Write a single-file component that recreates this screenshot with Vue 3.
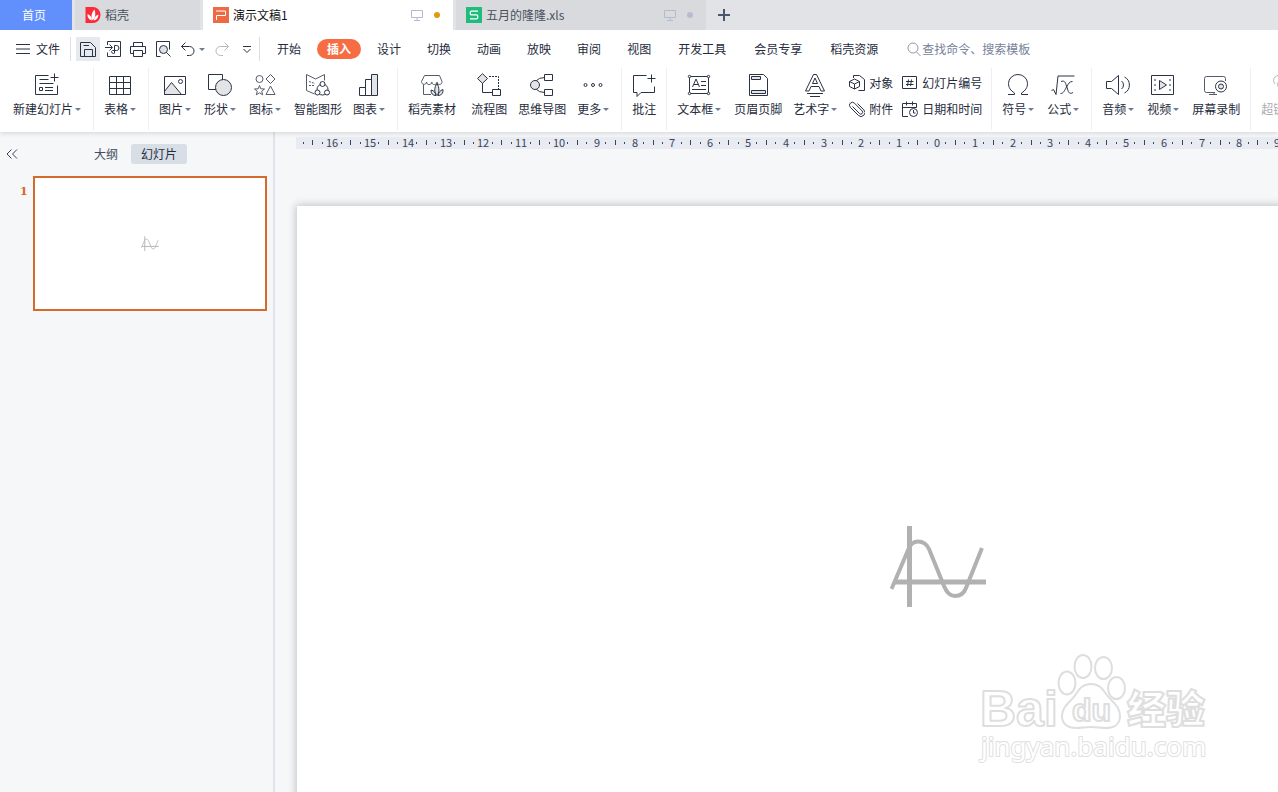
<template>
    <div class="app">
        <header class="top">
            <div class="tabs">
                <button class="tab-home">首页</button>
                <div v-for="tab in tabs" :key="tab.title" class="tab" :class="{ active: tab.active, narrow: !tab.status }">
                    <svg class="tab-icon" viewBox="0 0 16 16" v-html="logos[tab.logo]"></svg>
                    <span class="tab-title">{{ tab.title }}</span>
                    <template v-if="tab.status">
                        <svg class="monitor" viewBox="0 0 12 12"><path d="M.5 1.500h11v7h-11zM6 8.500v3M3 11.500h6" /></svg>
                        <i class="dot"></i>
                    </template>
                </div>
                <button class="tab-add" aria-label="新建">
                    <svg viewBox="0 0 12 12"><path d="M6 0v12M0 6h12" /></svg>
                </button>
            </div>

            <div class="menu">
                <button class="file">
                    <svg viewBox="0 0 14 10"><path d="M0 .5h14M0 5h14M0 9.500h14" /></svg>
                    <span>文件</span>
                </button>
                <div class="quick">
                    <button v-for="q in quick" :key="q.icon" class="quick-btn" :class="q.icon" :aria-label="q.label">
                        <svg viewBox="0 0 16 16" v-html="icons[q.icon]"></svg>
                        <i v-if="q.arrow" class="arrow"></i>
                    </button>
                </div>
                <nav class="nav">
                    <button v-for="m in menus" :key="m" class="nav-item" :class="{ on: m === current, long: m.length > 2 }" @click="current = m">{{ m }}</button>
                </nav>
                <label class="search">
                    <svg viewBox="0 0 14 14"><circle cx="6" cy="6" r="5" /><path d="M9.500 10l4 4" /></svg>
                    <input type="text" placeholder="查找命令、搜索模板" aria-label="查找命令、搜索模板">
                </label>
            </div>

            <div class="ribbon">
                <div v-for="(group, i) in groups" :key="i" class="group">
                    <div v-for="(part, j) in group" :key="j" class="part">
                        <template v-for="(item, k) in part" :key="k">
                            <div v-if="item.mini" class="mini-col">
                                <button v-for="m in item.mini" :key="m.label" class="mini">
                                    <svg viewBox="0 0 16 16" v-html="icons[m.icon]"></svg>
                                    <span>{{ m.label }}</span>
                                </button>
                            </div>
                            <button v-else class="item" :class="{ drop: item.arrow, off: item.off }">
                                <svg viewBox="0 0 24 24" v-html="icons[item.icon]"></svg>
                                <span class="item-label">{{ item.label }}<i v-if="item.arrow" class="arrow"></i></span>
                            </button>
                        </template>
                    </div>
                </div>
            </div>
        </header>

        <div class="body">
            <aside class="side">
                <div class="side-head">
                    <button class="collapse" aria-label="收起">
                        <svg viewBox="0 0 12 10"><path d="M5.500.500L1 5l4.500 4.500M11 .500L6.500 5l4.500 4.500" /></svg>
                    </button>
                    <button class="side-tab">大纲</button>
                    <button class="side-tab on">幻灯片</button>
                </div>
                <div class="thumb-row">
                    <span class="thumb-no">1</span>
                    <div class="thumb">
                        <svg class="wave" viewBox="0 0 96 82"><path :d="wave" /><path class="axis" d="M19.500 1v81M5 57h91" /></svg>
                    </div>
                </div>
            </aside>

            <main class="stage">
                <svg class="ruler">
                    <g v-for="t in ticks" :key="t.x">
                        <text v-if="t.text" :x="t.x" y="10">{{ t.text }}</text>
                        <rect v-else :x="t.x - 1" :y="t.half ? 3 : 5" width="1" :height="t.half ? 5 : 2" />
                    </g>
                </svg>
                <div class="slide">
                    <svg class="wave" viewBox="0 0 96 82"><path :d="wave" /><path class="axis" d="M19.500 1v81M5 57h91" /></svg>
                </div>
                <svg class="mark" viewBox="0 0 240 120">
                    <ellipse cx="92" cy="33" rx="8.500" ry="11.500" />
                    <ellipse cx="108" cy="16.500" rx="8.500" ry="11.500" />
                    <ellipse cx="128.500" cy="18" rx="8.500" ry="11" />
                    <ellipse cx="141.500" cy="38" rx="8.500" ry="11" />
                    <path d="M116 34c8 0 11 4 15 10 6 8 14 12 14 22 0 9-7 12-14 12-6 0-9-1-15-1s-9 1-15 1c-8 0-14-4-14-12 0-10 9-14 14-22 4-6 7-10 15-10z" />
                    <text class="mark-bai" x="5" y="76">Bai</text>
                    <text class="mark-du" x="97" y="71">du</text>
                    <text class="mark-cn" x="152" y="73">经验</text>
                    <text class="mark-url" x="6" y="106">jingyan.baidu.com</text>
                </svg>
            </main>
        </div>
    </div>
</template>

<script setup>
import { ref } from 'vue';

const current = ref('插入');

const tabs = [
    { title: '稻壳', logo: 'docer' },
    { title: '演示文稿1', logo: 'wpp', active: true, status: true },
    { title: '五月的隆隆.xls', logo: 'et', status: true }
];

const menus = ['开始', '插入', '设计', '切换', '动画', '放映', '审阅', '视图', '开发工具', '会员专享', '稻壳资源'];

const quick = [
    { icon: 'save', label: '保存' },
    { icon: 'export', label: '输出为PDF' },
    { icon: 'print', label: '打印' },
    { icon: 'preview', label: '打印预览' },
    { icon: 'undo', label: '撤销', arrow: true },
    { icon: 'redo', label: '恢复' },
    { icon: 'custom', label: '自定义' }
];

// group > part > item, a group ends with a divider line
const groups = [
    [[{ label: '新建幻灯片', icon: 'newSlide', arrow: true }]],
    [[{ label: '表格', icon: 'table', arrow: true }]],
    [[
        { label: '图片', icon: 'picture', arrow: true },
        { label: '形状', icon: 'shape', arrow: true },
        { label: '图标', icon: 'icons', arrow: true },
        { label: '智能图形', icon: 'smart' },
        { label: '图表', icon: 'chart', arrow: true }
    ]],
    [
        [{ label: '稻壳素材', icon: 'store' }],
        [
            { label: '流程图', icon: 'flow' },
            { label: '思维导图', icon: 'mind' },
            { label: '更多', icon: 'more', arrow: true }
        ]
    ],
    [[{ label: '批注', icon: 'comment' }]],
    [[
        { label: '文本框', icon: 'textbox', arrow: true },
        { label: '页眉页脚', icon: 'headFoot' },
        { label: '艺术字', icon: 'wordart', arrow: true },
        { mini: [{ label: '对象', icon: 'object' }, { label: '附件', icon: 'clip' }] },
        { mini: [{ label: '幻灯片编号', icon: 'number' }, { label: '日期和时间', icon: 'date' }] }
    ]],
    [[
        { label: '符号', icon: 'symbol', arrow: true },
        { label: '公式', icon: 'formula', arrow: true }
    ]],
    [[
        { label: '音频', icon: 'audio', arrow: true },
        { label: '视频', icon: 'video', arrow: true },
        { label: '屏幕录制', icon: 'record' }
    ]],
    [[{ label: '超链接', icon: 'link', arrow: true, off: true }]]
];

const logos = {
    docer: '<path fill="#fb2b3c" d="M.5 0h7.500a7.500 8 0 0 1 0 16H.5z"/><path fill="#fff" d="M7.800 13.500C5.500 10 6.500 5.500 9.500 2.500c1.500 4 1 8-1.700 11zM6.800 13.500C3.500 12.500 2.300 10 2.500 7c2.800 1 4.500 3.500 4.300 6.500zM8.800 13.500c.4-3 1.700-5 4.700-6 0 3-1.500 5.300-4.700 6z"/>',
    wpp: '<rect width="16" height="16" fill="#ee6a43"/><path fill="none" stroke="#fff" d="M3.500 13V8.500h9v-4.500H3"/>',
    et: '<rect width="16" height="16" fill="#1fbc7b"/><path fill="none" stroke="#fff" stroke-width="1.300" d="M12 4.200H5.500q-1.200 0-1.200 1.200v1.300q0 1.200 1.200 1.200h5q1.200 0 1.200 1.200v1.500q0 1.200-1.200 1.200H4"/>'
};

const icons = {
    save: '<path d="M.5 1.500h10l5 5v9H.5zM3.500 4.500h5.500M4.500 15.500v-7h8v7"/>',
    export: '<path d="M2.500 4V.5h13v15h-13v-4M0 6.500h7M4.500 3.500l3 3-3 3M9.500 12.500v-8h2a2.500 2.500 0 0 1 0 5h-4a1.500 1.500 0 1 0 2 2"/>',
    print: '<path d="M3.500 5.500v-4h9v4M3.500 12.500h-3v-7h15v7h-3M3.500 9.500h9v6h-9z"/>',
    preview: '<path d="M5.500 15.500h-4V.5h13v8"/><circle cx="8.500" cy="8.500" r="4" fill="#dfe1e4"/><path d="M11.500 11.500l4 4"/>',
    undo: '<path d="M5.500 1.500l-4 4 4 4M1.500 5.500h8a4.500 4.500 0 0 1 0 9H7"/>',
    redo: '<path d="M10.500 1.500l4 4-4 4M14.500 5.500h-8a4.500 4.500 0 0 0 0 9H9"/>',
    custom: '<path d="M4 5.500h8M4.500 8l3.500 3.500L11.500 8"/>',
    newSlide: '<path d="M13.500 2.500H.5v19h22v-9M15.500 4.500h8M19.500.5v8M4.500 6.500h9M4.500 10.500h14M4.500 14.500h3v3h-3zM10 14.500h8M10 17.500h8"/>',
    table: '<path d="M1.500 3.500h21v18h-21zM1.500 9.500h21M1.500 15.500h21M8.500 3.500v18M15.500 3.500v18"/>',
    picture: '<path d="M1.500 18.500L8.500 9.500l10 12h-17z" fill="#e3e4e6"/><path d="M1.500 3.500h21v18h-21z"/><circle cx="17.500" cy="8.500" r="2"/>',
    shape: '<path d="M.5 1.500h14v15H.5z"/><circle cx="15.500" cy="14.500" r="8" fill="#e3e4e6"/>',
    icons: '<g stroke="#555b69"><circle cx="6.500" cy="6" r="3.500"/><path d="M17.500 1.500L22 6l-4.500 4.500L13 6zM17.500 13l4.500 8.500h-9zM6.500 12.500l1.300 3.300 3.700.2-2.800 2.300 1 3.500-3.200-2-3.200 2 1-3.500L1.500 16l3.700-.2z"/></g>',
    smart: '<g stroke="#555b69"><path d="M8.500 21L.5 17.500V1.500l9 4.500 9-4.500v6"/><path d="M3 8.500l6 2M3 12.500h6" stroke-dasharray="2 1"/></g><circle cx="16.500" cy="16.500" r="5.500"/><circle cx="16.500" cy="11" r="2.500" fill="#fff"/><circle cx="11.500" cy="19.500" r="2.500" fill="#fff"/><circle cx="21" cy="19.500" r="2.500" fill="#fff"/>',
    chart: '<path d="M2.500 14.500h6v8h-6zM8.500 6.500h6v16h-6z"/><path d="M14.500 1.500h6v21h-6z" fill="#e3e4e6"/>',
    store: '<path stroke="#555b69" d="M11 21.500H3.500v-10M4.500 2.500h15l2.500 6c0 4-4.500 4-5 .5-.5 3.500-5 3.500-5.200 0-.5 3.500-5 3.500-5.300 0-.5 3.500-5 3-5-.5z"/><path fill="#e3e4e6" d="M17 22.500c-3-3-3-8 0-12 2.500 4 2.500 9 0 12zM16 22.500c-3.500 0-5-2-5-5.500 3 .5 4.500 2.500 5 5.500zM18 22.500c.5-3 2-5 5-6 .3 3.500-1.500 6-5 6z"/>',
    flow: '<path d="M5.500 10v9.500h10M15.500 16.500h8v6h-8z"/><path d="M5.500.7l5 4.800-5 4.800-5-4.800z" fill="#e3e4e6"/><path d="M12 3.500h9.500v13" stroke-dasharray="2 1"/>',
    mind: '<path d="M6 8q3-3.500 8.500-3.500M6 16q3 3.500 8.500 3.500M14.500 1.500h8v6h-8zM14.500 16.500h8v6h-8z"/><circle cx="5" cy="12" r="4.500" fill="#e3e4e6"/>',
    more: '<circle cx="4.500" cy="12" r="1.500"/><circle cx="12" cy="12" r="1.500"/><circle cx="19.500" cy="12" r="1.500"/>',
    comment: '<path d="M14.500 2.500H1.500v17h3.500v4l4-4h13.500v-6M15.500 5.500h8M19.500 1.500v8"/>',
    textbox: '<path d="M2.500 3.500h19v17h-19zM14 8.500h5M14 12.500h5M5 16.500h14"/><g fill="#fff"><circle cx="2.500" cy="3.500" r="1.200"/><circle cx="21.500" cy="3.500" r="1.200"/><circle cx="2.500" cy="20.500" r="1.200"/><circle cx="21.500" cy="20.500" r="1.200"/></g><path d="M5.500 14l3.500-8 3.500 8M7 11.500h4"/>',
    headFoot: '<path d="M3.500 1.500h14l4 4v17h-18z"/><path d="M5.500 3.500h9v3h-9zM5.500 17.500h14v3h-14z" fill="#e3e4e6"/>',
    wordart: '<path d="M10.500 1.500h3l8 16.500h-3.500l-2-4.500h-8L6 18H2.500zM9.500 10.500h5L12 5z"/><path d="M4 20.500h16M7 23.500h10"/>',
    object: '<path d="M4.500 3V.5h6l5 4v11h-6"/><path d="M5.500 4l5 2.500v5l-5 2.500-5-2.500v-5zM.5 6.500l5 2.500 5-2.500M5.500 9v5"/>',
    clip: '<path d="M3.500 5.500l7 7a1.800 1.800 0 0 0 2.700-2.500L5.500 2.200A2.900 2.900 0 0 0 1.300 6.300l8 8a3.800 3.800 0 0 0 5.500-5.500L8.500 2.500"/>',
    number: '<path d="M.5 1.500h14v12H.5zM6.500 4.500L5.500 11M9.500 4.500l-1 6.500M4 6.500h7.500M4 9.500h7.500"/>',
    date: '<path d="M6 15.500H.5v-13h14v4M.5 6.500h14M4.500.5v4M10.500.5v4"/><circle cx="11.500" cy="11.500" r="4" fill="#fff"/><path d="M11.500 9v3h2"/>',
    symbol: '<path d="M2 21.500h6.500V20C4.500 17.500 2.500 14.500 2.500 10.500a9.500 9 0 0 1 19 0c0 4-2 7-6 9.500v1.500H22"/>',
    formula: '<path d="M.5 17.500l2-1 2.500 5 2-18.500h16.500M10 8.500c3-1 4 0 5 3l2 6c1 3 2.500 3.500 5 2M21.500 8.500c-3 0-4 2-6 5.500s-3 6.500-6 6.500"/>',
    audio: '<path d="M.5 8.500h5l7-6v19l-7-6h-5zM15.500 8a5 5 0 0 1 0 8M18.500 4a9 9 0 0 1 0 16"/>',
    video: '<path d="M.5 2.500h22v19H.5z"/><path d="M8.500 7.500v9l7-4.500z" fill="#e3e4e6"/><path d="M4 6v13M19 6v13" stroke-dasharray="2 3"/>',
    record: '<path stroke="#555b69" d="M11 19.500H2.500a2 2 0 0 1-2-2v-12a2 2 0 0 1 2-2h17a2 2 0 0 1 2 2V8M5 21.500h8M10 19.500v2"/><circle cx="17" cy="13.500" r="5.500" fill="#fff"/><circle cx="17" cy="13.500" r="2.500" fill="#e3e4e6"/>',
    link: '<path d="M4 11a5 5 0 0 1 0-7 5 5 0 0 1 7 0l5 5a5 5 0 0 1 0 7M20 13a5 5 0 0 1 0 7 5 5 0 0 1-7 0l-5-5a5 5 0 0 1 0-7"/>'
};

const wave = 'M1.500 64L18.500 24Q21.500 16.500 28 16.500Q35.500 16.500 39 24L54 61Q58 71 65 71Q73 71 76 63L92 23';

// 1 cm at 96 dpi, quarter steps, zero in the middle of the slide
const CM = 37.8;
const ORIGIN = 641;
const ticks = [];
for (let q = -67; q <= 37; q++) {
    const x = Math.round(ORIGIN + (q * CM) / 4);
    ticks.push({
        x: x,
        text: q % 4 === 0 ? String(Math.abs(q / 4)) : '',
        half: Math.abs(q % 4) === 2
    });
}
</script>

<style>
body {
    margin: 0;
}
</style>

<style scoped>
.app {
    display: flex;
    flex-direction: column;
    height: 100vh;
    overflow: hidden;
    background: #f5f7f9;
    color: #262c3d;
    font: 12px/16px "Noto Sans CJK SC", sans-serif;
}

button {
    padding: 0;
    border: 0;
    background: none;
    color: inherit;
    font: inherit;
    white-space: nowrap;
    cursor: pointer;
}

svg {
    display: block;
    flex: none;
    fill: none;
    stroke: #2b3245;
}

.top {
    position: relative;
    flex: none;
    background: #fff;
    box-shadow: 0 1px 5px rgba(0, 0, 0, 0.15);
}

.arrow {
    flex: none;
    border: 3px solid transparent;
    border-top-color: #6f7b94;
    border-bottom: 0;
}

/* document tabs */
.tabs {
    display: flex;
    gap: 3px;
    height: 30px;
    background: #e2e3e7;
}

.tab-home {
    width: 72px;
    padding-right: 4px;
    background: #618ffb;
    color: #fff;
}

.tab {
    display: flex;
    align-items: center;
    box-sizing: border-box;
    width: 250px;
    padding: 0 13px 0 10px;
    background: #d8dadd;
    color: #4a5060;
}

.tab.narrow {
    width: 125px;
}

.tab.active {
    background: #fff;
    color: #111;
}

.tab-icon {
    width: 16px;
    height: 16px;
    margin-right: 4px;
    stroke: none;
}

.tab-title {
    flex: 1;
}

.monitor {
    width: 12px;
    height: 12px;
    margin-right: 11px;
    stroke: #b3bacd;
}

.dot {
    width: 6px;
    height: 6px;
    border-radius: 50%;
    background: #b7bdd0;
}

.active .dot {
    background: #e09a0b;
}

.tab-add {
    padding: 0 9px;
}

.tab-add svg {
    width: 12px;
    height: 12px;
    stroke: #4a566f;
    stroke-width: 2;
}

/* menu row */
.menu {
    display: flex;
    align-items: center;
    height: 38px;
    padding-left: 16px;
}

.file {
    display: flex;
    align-items: center;
    gap: 6px;
    height: 24px;
    padding-right: 10px;
    border-right: 1px solid #dddfe4;
}

.file svg {
    width: 14px;
    height: 10px;
}

.quick {
    display: flex;
    gap: 1px;
    padding-left: 5px;
    border-right: 1px solid #dddfe4;
}

.quick-btn {
    display: flex;
    align-items: center;
    height: 24px;
    padding: 0 4px;
}

.quick-btn svg {
    width: 16px;
    height: 16px;
}

.quick-btn .arrow {
    margin-left: 3px;
}

.quick-btn.save {
    background: #e6e9ee;
}

.quick-btn.redo svg {
    stroke: #b5b8bf;
}

.nav {
    display: flex;
    gap: 6px;
    margin-left: 7px;
}

.nav-item {
    height: 20px;
    padding: 0 10px;
    border-radius: 10px;
}

.nav-item.long {
    padding: 0 11px;
}

.nav-item.on {
    background: #f66d44;
    color: #fff;
    font-weight: bold;
}

.search {
    display: flex;
    align-items: center;
    gap: 1px;
    flex: 1;
    margin-left: 18px;
}

.search svg {
    width: 14px;
    height: 14px;
    stroke: #8f99ad;
}

.search input {
    flex: 1;
    min-width: 0;
    padding: 0;
    border: 0;
    outline: 0;
    background: none;
    font: inherit;
}

.search input::placeholder {
    color: #76819a;
    opacity: 1;
}

/* ribbon */
.ribbon {
    display: flex;
    height: 62px;
    padding: 0 0 2px 3px;
    overflow: hidden;
}

.group {
    display: flex;
    flex: none;
    gap: 4px;
    padding: 0 5px 0 4px;
    border-right: 1px solid #eeeff1;
}

.part {
    display: flex;
}

.item {
    display: flex;
    flex-direction: column;
    align-items: center;
    gap: 4px;
    padding: 5px 5px 0 6px;
}

.item.drop {
    padding-right: 7px;
}

.item svg {
    width: 24px;
    height: 24px;
}

.item-label {
    display: flex;
    align-items: center;
    gap: 2px;
}

.item.off {
    color: #a9abb0;
}

.item.off svg {
    stroke: #b5b7bb;
}

.mini-col {
    display: flex;
    flex-direction: column;
    gap: 10px;
    padding: 7px 4px 0 5px;
}

.mini {
    display: flex;
    align-items: center;
    gap: 4px;
}

.mini svg {
    width: 16px;
    height: 16px;
}

/* slide list */
.body {
    display: flex;
    flex: 1;
    min-height: 0;
}

.side {
    flex: none;
    box-sizing: border-box;
    width: 275px;
    padding-top: 12px;
    border-right: 2px solid #e1e3ea;
}

.side-head {
    display: flex;
    align-items: center;
    padding-left: 6px;
}

.collapse {
    margin-right: 66px;
}

.collapse svg {
    width: 12px;
    height: 10px;
    stroke: #3b4257;
}

.side-tab {
    height: 20px;
    padding: 0 10px;
    border-radius: 3px;
    color: #454c60;
}

.side-tab + .side-tab {
    margin-left: 3px;
}

.side-tab.on {
    background: #d8dee6;
    color: #262c3d;
}

.thumb-row {
    display: flex;
    gap: 6px;
    padding: 12px 6px 0 20px;
}

.thumb-no {
    width: 7px;
    padding-top: 8px;
    color: #d8641f;
    font: bold 11px/16px "DejaVu Serif", serif;
}

.thumb {
    display: flex;
    align-items: center;
    justify-content: center;
    flex: 1;
    box-sizing: border-box;
    height: 135px;
    border: 2px solid #d46b2c;
    background: #fff;
}

.wave {
    stroke: #b1b1b1;
    stroke-width: 4;
}

.wave .axis {
    stroke-width: 5;
}

.thumb .wave {
    width: 18px;
    height: 15px;
}

/* editing area */
.stage {
    position: relative;
    flex: 1;
    min-width: 0;
    overflow: hidden;
    padding: 5px 0 0 21px;
}

.ruler {
    width: 100%;
    height: 12px;
    overflow: visible;
    background: #e8ebf1;
    fill: #3b435a;
    stroke: none;
    font-size: 11px;
    text-anchor: middle;
}

.slide {
    display: flex;
    align-items: center;
    justify-content: center;
    width: 1282px;
    height: 720px;
    margin: 57px 0 0 1px;
    background: #fff;
    box-shadow: 0 0 8px 1px rgba(0, 0, 0, 0.22);
}

.slide .wave {
    width: 96px;
    height: 82px;
}

.mark {
    position: absolute;
    right: 63px;
    bottom: 22px;
    width: 240px;
    height: 120px;
    fill: #fff;
    stroke: #dedede;
    stroke-width: 2;
    stroke-linejoin: round;
}

.mark-bai {
    font: bold 50px "Liberation Sans", sans-serif;
}

.mark-du {
    font: bold 32px "Liberation Sans", sans-serif;
}

.mark-cn {
    font: 900 39px "Noto Sans CJK SC", sans-serif;
}

.mark-url {
    font: 26px "Noto Sans", sans-serif;
    stroke: #e0e0e0;
    paint-order: stroke;
}
</style>
